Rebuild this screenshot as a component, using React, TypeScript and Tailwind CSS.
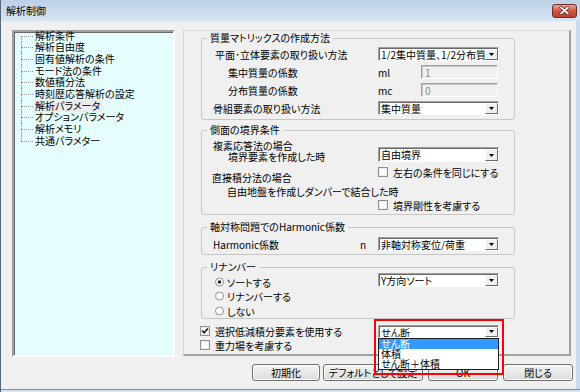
import React from "react";

const treeItems = [
  "解析条件",
  "解析自由度",
  "固有値解析の条件",
  "モード法の条件",
  "数値積分法",
  "時刻歴応答解析の設定",
  "解析パラメータ",
  "オプションパラメータ",
  "解析メモリ",
  "共通パラメター",
];

const Arrow: React.FC = () => (
  <svg width="5" height="3" viewBox="0 0 5 3">
    <path d="M0 0h5L2.5 3z" fill="#000" />
  </svg>
);

const Combo: React.FC<{ value: string; h?: string }> = ({ value, h = "h-[14px]" }) => (
  <div
    className={`flex ${h} w-[121px] border border-t-[#a0a0a0] border-l-[#a0a0a0] border-r-white border-b-white bg-white pt-[1px] pl-[1px] shadow-[inset_1px_1px_0_#696969]`}
  >
    <div className="flex-1 overflow-hidden whitespace-nowrap pl-[1px] leading-[11px]">{value}</div>
    <div className="flex w-[13px] items-center justify-center border border-t-white border-l-white border-r-[#696969] border-b-[#696969] bg-[#f0f0f0]">
      <Arrow />
    </div>
  </div>
);

const Disabled: React.FC<{ value: string }> = ({ value }) => (
  <div className="h-[14px] w-[77px] border border-t-[#a0a0a0] border-l-[#a0a0a0] border-r-white border-b-white bg-[#f0f0f0] pl-[3px] pt-[1px] leading-[11px] text-[#8a8a8a] shadow-[inset_1px_1px_0_#c8c8c8]">
    {value}
  </div>
);

const Check: React.FC<{ checked?: boolean }> = ({ checked }) => (
  <svg width="10" height="10" viewBox="0 0 10 10" className="shrink-0">
    <rect x="0.5" y="0.5" width="9" height="9" fill="#fff" stroke="#8f8f8f" />
    <rect x="1.5" y="1.5" width="7" height="7" fill="none" stroke="#ececec" />
    {checked && <path d="M2.2 4.6 L4.1 6.8 L7.9 2.4" fill="none" stroke="#151515" strokeWidth="1.6" />}
  </svg>
);

const Radio: React.FC<{ on?: boolean }> = ({ on }) => (
  <svg width="10" height="10" viewBox="0 0 10 10" className="mr-[2px] shrink-0">
    <circle cx="4.5" cy="5" r="4" fill="#fff" stroke="#8f8f8f" />
    {on && <circle cx="4.5" cy="5" r="1.8" fill="#222" />}
  </svg>
);

const Group: React.FC<{ title: string; className?: string; children: React.ReactNode }> = ({
  title,
  className = "",
  children,
}) => (
  <fieldset className={`w-[314px] rounded-[3px] border border-[#c6c6c6] ${className}`}>
    <legend className="ml-[5px] px-[3px] leading-[12px]">{title}</legend>
    {children}
  </fieldset>
);

const Btn: React.FC<{ w: string; children: React.ReactNode }> = ({ w, children }) => (
  <div
    className={`${w} flex h-[17px] items-center justify-center rounded-[3px] border border-[#707070] bg-linear-to-b from-[#f5f5f5] to-[#dadada] shadow-[inset_0_0_0_1px_#fbfbfb]`}
  >
    {children}
  </div>
);

export default function App() {
  return (
    <div className="flex h-[392px] w-[580px] flex-col overflow-hidden border-l border-[#56667a] bg-[#c9daee] text-[10px] text-black font-['Noto_Sans_CJK_JP',sans-serif] [font-feature-settings:'palt']">
      {/* title bar */}
      <div className="flex h-[21px] items-center justify-between bg-linear-to-b from-[#bccfe7] to-[#d8e5f4] pl-[5px] pr-[3px]">
        <span className="leading-none">解析制御</span>
        <div className="flex h-[14px] w-[25px] items-center justify-center rounded-[3px] border border-[#6d2c24] bg-linear-to-b from-[#e9a696] via-[#cf5645] to-[#c0402f]">
          <svg width="11" height="9" viewBox="0 0 11 9">
            <path d="M2 1.5l7 6M9 1.5l-7 6" stroke="#5a1d16" strokeWidth="3.2" strokeLinecap="round" />
            <path d="M2 1.5l7 6M9 1.5l-7 6" stroke="#fff" strokeWidth="1.8" strokeLinecap="round" />
          </svg>
        </div>
      </div>

      {/* client */}
      <div className="mr-[4px] flex h-[368px] flex-col bg-[#f0f0f0]">
        <div className="flex items-start gap-[8px] pl-[11px] pt-[9px]">
          {/* tree */}
          <div className="h-[327px] w-[163px] border-2 border-t-[#a0a0a0] border-l-[#a0a0a0] border-r-white border-b-white bg-[#e6fdfd] shadow-[inset_1px_1px_0_#696969]">
            <div className="-mt-[2px] pl-[7px]">
              {treeItems.map((t, i) => (
                <div key={t} className="flex h-[11.67px] items-stretch">
                  <div className="flex w-[12px] flex-col">
                    <div className={`h-1/2 border-dotted border-[#9a9a9a] ${i > 0 ? "border-l" : ""}`} />
                    <div
                      className={`h-1/2 border-t border-dotted border-[#9a9a9a] ${
                        i < treeItems.length - 1 ? "border-l" : ""
                      }`}
                    />
                  </div>
                  <span
                    className={`flex items-center whitespace-nowrap px-[2px] leading-none ${
                      t === "解析パラメータ" ? "bg-[#ececec]" : ""
                    }`}
                  >
                    {t}
                  </span>
                </div>
              ))}
            </div>
          </div>

          {/* settings panel */}
          <div className="h-[326px] w-[388px] border-t border-l border-r-2 border-b-2 border-t-[#d6d6d6] border-l-[#d6d6d6] border-r-[#a0a0a0] border-b-[#a0a0a0]">
            <div className="flex flex-col items-start pl-[17px] pt-[1px]">
              <Group title="質量マトリックスの作成方法">
                <div className="pb-[2px] pt-[1px]">
                  <div className="flex h-[18px] items-center">
                    <div className="w-[176px] whitespace-nowrap pl-[13px]">平面･立体要素の取り扱い方法</div>
                    <Combo value="1/2集中質量、1/2分布質量" />
                  </div>
                  <div className="flex h-[18px] items-center">
                    <div className="w-[176px] whitespace-nowrap pl-[26px]">集中質量の係数</div>
                    <div className="w-[43px]">ml</div>
                    <Disabled value="1" />
                  </div>
                  <div className="flex h-[18px] items-center">
                    <div className="w-[176px] whitespace-nowrap pl-[26px]">分布質量の係数</div>
                    <div className="w-[43px]">mc</div>
                    <Disabled value="0" />
                  </div>
                  <div className="flex h-[18px] items-center">
                    <div className="w-[176px] whitespace-nowrap pl-[11px]">骨組要素の取り扱い方法</div>
                    <Combo value="集中質量" />
                  </div>
                </div>
              </Group>

              <Group title="側面の境界条件" className="mt-[4px]">
                <div className="flex pb-[3px]">
                  <div className="flex w-[176px] flex-col whitespace-nowrap pt-[4px]">
                    <div className="h-[11px] pl-[11px] leading-[11px]">複素応答法の場合</div>
                    <div className="h-[12px] pl-[26px] leading-[12px]">境界要素を作成した時</div>
                    <div className="mt-[9px] h-[12px] pl-[10px] leading-[12px]">直接積分法の場合</div>
                    <div className="mt-[2px] h-[12px] pl-[25px] leading-[12px]">自由地盤を作成しダンパーで結合した時</div>
                  </div>
                  <div className="flex flex-col pt-[11px]">
                    <Combo value="自由境界" h="h-[15px]" />
                    <div className="mt-[4px] flex h-[12px] items-center">
                      <Check />
                      <span className="ml-[5px] whitespace-nowrap">左右の条件を同じにする</span>
                    </div>
                    <div className="mt-[21px] flex h-[12px] items-center">
                      <Check />
                      <span className="ml-[5px] whitespace-nowrap">境界剛性を考慮する</span>
                    </div>
                  </div>
                </div>
              </Group>

              <Group title="軸対称問題でのHarmonic係数" className="mt-[6px]">
                <div className="mb-[3px] mt-[4px] flex h-[14px] items-center">
                  <div className="flex w-[176px] justify-between pl-[11px] pr-[12px]">
                    <span>Harmonic係数</span>
                    <span>n</span>
                  </div>
                  <Combo value="非軸対称変位/荷重" />
                </div>
              </Group>

              <Group title="リナンバー" className="mt-[6px]">
                <div className="flex">
                  <div className="flex w-[176px] flex-col pl-[13px] pt-[2px]">
                    <div className="flex h-[14px] items-center">
                      <Radio on />
                      <span>ソートする</span>
                    </div>
                    <div className="flex h-[14px] items-center">
                      <Radio />
                      <span>リナンバーする</span>
                    </div>
                    <div className="mt-[1px] flex h-[14px] items-center">
                      <Radio />
                      <span>しない</span>
                    </div>
                  </div>
                  <div>
                    <Combo value="Y方向ソート" />
                  </div>
                </div>
              </Group>

              <div className="mt-[5px] flex h-[14px] items-center">
                <div className="-ml-[1px] flex w-[178px] items-center">
                  <Check checked />
                  <span className="ml-[5px] whitespace-nowrap">選択低減積分要素を使用する</span>
                </div>
                <div className="relative">
                  <Combo value="せん断" h="h-[13px]" />
                  <div className="absolute left-0 top-full z-10 w-[121px] border border-[#1e1e1e] bg-white leading-[10px]">
                    <div className="h-[10px] bg-[#3399ff] pl-[2px] text-white">せん断</div>
                    <div className="h-[10px] pl-[2px]">体積</div>
                    <div className="h-[10px] pl-[2px]">せん断＋体積</div>
                  </div>
                  <div className="absolute -left-[4px] -top-[6px] z-20 h-[56px] w-[130px] border-2 border-[#ff0000]" />
                </div>
              </div>
              <div className="-ml-[1px] flex h-[14px] items-center">
                <Check />
                <span className="ml-[5px] whitespace-nowrap">重力場を考慮する</span>
              </div>
            </div>
          </div>
        </div>

        {/* buttons */}
        <div className="ml-[251px] mt-[7px] flex">
          <Btn w="w-[68px]">初期化</Btn>
          <div className="ml-[3px]">
            <Btn w="w-[100px]">デフォルトとして設定</Btn>
          </div>
          <div className="ml-[5px]">
            <Btn w="w-[70px]">OK</Btn>
          </div>
          <div className="ml-[5px]">
            <Btn w="w-[70px]">閉じる</Btn>
          </div>
        </div>
      </div>

      <div className="h-[3px] border-t border-[#3fa2dd] bg-[#d5e4f4]" />
    </div>
  );
}
